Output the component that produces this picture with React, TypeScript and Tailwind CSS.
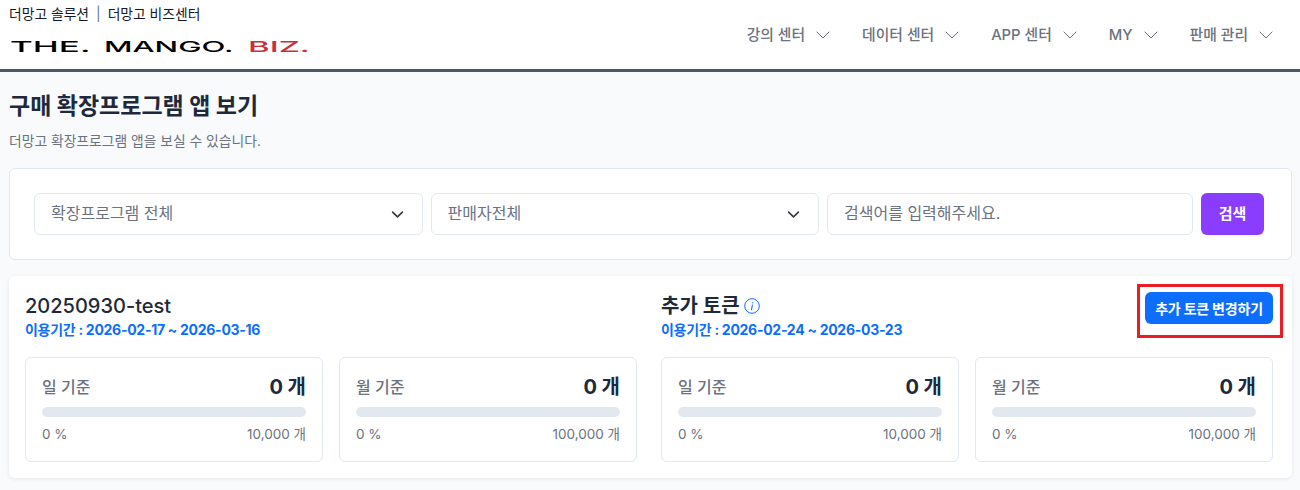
import { ChevronDown } from "lucide-react";

const NAV = [
  { label: "강의 센터", gap: "mr-[27px]" },
  { label: "데이터 센터", gap: "mr-[27px]" },
  { label: "APP 센터", gap: "mr-[27px]" },
  { label: "MY", gap: "mr-[27px]" },
  { label: "판매 관리", gap: "" },
];

const SelectBox = ({ label }: { label: string }) => (
  <div className="flex h-[42px] flex-1 items-center justify-between rounded-md border border-[#e2e8f0] bg-white pl-4 pr-[18px] text-[16px] text-[#6b7280]">
    <span className="pb-[2px]">{label}</span>
    <svg viewBox="0 0 16 16" className="h-[13px] w-[13px]" fill="none" stroke="#343a40" strokeWidth="2" strokeLinecap="round" strokeLinejoin="round">
      <path d="m2 5 6 6 6-6" />
    </svg>
  </div>
);

const UsageCard = ({ title, limit }: { title: string; limit: string }) => (
  <div className="h-[105px] flex-1 rounded-md border border-[#e2e8f0] bg-white px-4 pt-[15px]">
    <div className="flex items-center justify-between">
      <span className="text-[16px] font-medium text-[#6b7280]">{title}</span>
      <span className="text-[20px] font-bold leading-[28px] text-[#1e293b]">0 개</span>
    </div>
    <div className="mt-[6px] h-[10px] rounded-full bg-[#e2e8f0]" />
    <div className="mt-[7px] flex items-center justify-between text-[13.5px] text-[#6b7280]">
      <span>0 %</span>
      <span>{limit}</span>
    </div>
  </div>
);

const App = () => {
  return (
    <div className="min-h-screen overflow-hidden bg-[#f8fafc] font-['Inter','Noto_Sans_CJK_KR',sans-serif]">
      {/* Header */}
      <header className="flex h-[72px] justify-between border-b-[3px] border-[#4f5568] bg-white pl-[9px] pr-[22px]">
        <div>
          <div className="mt-[4px] flex items-center text-[13.8px] leading-[20px] text-[#111827]">
            <span>더망고 솔루션</span>
            <span className="mx-[7px] text-[#64748b]">|</span>
            <span>더망고 비즈센터</span>
          </div>
          {/* Logo */}
          <div className="ml-px mt-[15px] flex h-[16px] items-center text-[15px] font-medium leading-[16px]">
            <span className="w-[79px] origin-left scale-x-[2.33] text-black">THE.</span>
            <span className="ml-[15px] w-[129px] origin-left scale-x-[2.08] text-black">MANGO.</span>
            <span className="ml-[15px] origin-left scale-x-[2.2] text-[#c8303a]">BIZ.</span>
          </div>
        </div>
        <nav className="mt-[24px] flex h-[22px] items-center text-[14.8px] font-medium text-[#6b7280]">
          {NAV.map((item) => (
            <div key={item.label} className={`flex items-center ${item.gap}`}>
              <span>{item.label}</span>
              <ChevronDown className="ml-[6px] h-[24px] w-[24px]" strokeWidth={1} />
            </div>
          ))}
        </nav>
      </header>

      <main className="px-[9px]">
        <h1 className="mt-[19px] text-[23px] font-bold leading-[30px] text-[#1e293b]">구매 확장프로그램 앱 보기</h1>
        <p className="mt-[10px] text-[13.8px] leading-[20px] text-[#6b7280]">더망고 확장프로그램 앱을 보실 수 있습니다.</p>

        {/* Search */}
        <section className="mt-[17px] flex h-[92px] w-[1283px] items-center gap-2 rounded-md border border-[#e2e8f0] bg-white pl-[24px] pr-[27px]">
          <div className="flex w-[785px] gap-2">
            <SelectBox label="확장프로그램 전체" />
            <SelectBox label="판매자전체" />
          </div>
          <div className="flex h-[42px] w-[366px] items-center rounded-md border border-[#e2e8f0] bg-white pb-[2px] pl-4 text-[16px] text-[#6b7280]">
            검색어를 입력해주세요.
          </div>
          <button className="h-[42px] w-[63px] rounded-md bg-[#8b3dff] text-[15px] font-bold text-white">검색</button>
        </section>

        {/* Usage */}
        <section className="relative mt-[16px] flex h-[202px] w-[1283px] gap-6 rounded-md bg-white pl-4 pr-[19px] pt-[18px] shadow-[0_1px_4px_rgba(15,23,42,0.08)]">
          <div className="flex-1">
            <h2 className="text-[20px] font-medium leading-[24px] text-[#1e293b]">20250930-test</h2>
            <p className="mt-[2px] text-[14px] font-bold leading-[20px] tracking-[-0.28px] text-[#0d6efd]">이용기간 : 2026-02-17 ~ 2026-03-16</p>
            <div className="mt-[17px] flex gap-4">
              <UsageCard title="일 기준" limit="10,000 개" />
              <UsageCard title="월 기준" limit="100,000 개" />
            </div>
          </div>
          <div className="flex-1">
            <h2 className="flex items-center text-[20px] font-semibold leading-[24px] text-[#1e293b]">
              추가 토큰
              <svg viewBox="0 0 16 16" className="ml-[4px] h-4 w-4" fill="none" stroke="#0d6efd">
                <circle cx="8" cy="8" r="7.3" strokeWidth="1" />
                <path d="M8.4 7 7.5 11.6" strokeWidth="1.1" strokeLinecap="round" />
                <circle cx="8.7" cy="4.7" r="0.6" fill="#0d6efd" stroke="none" />
              </svg>
            </h2>
            <p className="mt-[2px] text-[14px] font-bold leading-[20px] tracking-[-0.28px] text-[#0d6efd]">이용기간 : 2026-02-24 ~ 2026-03-23</p>
            <div className="mt-[17px] flex gap-4">
              <UsageCard title="일 기준" limit="10,000 개" />
              <UsageCard title="월 기준" limit="100,000 개" />
            </div>
          </div>
          <button className="absolute right-[19px] top-[16px] h-[32px] w-[128px] rounded-md bg-[#0d6efd] text-[14px] font-bold tracking-[-0.2px] text-white">
            추가 토큰 변경하기
          </button>
          {/* Red annotation frame */}
          <div className="absolute left-[1128px] top-[8px] h-[54px] w-[146px] border-[3px] border-[#ed1c24]" />
        </section>
      </main>
    </div>
  );
};

export default App;
